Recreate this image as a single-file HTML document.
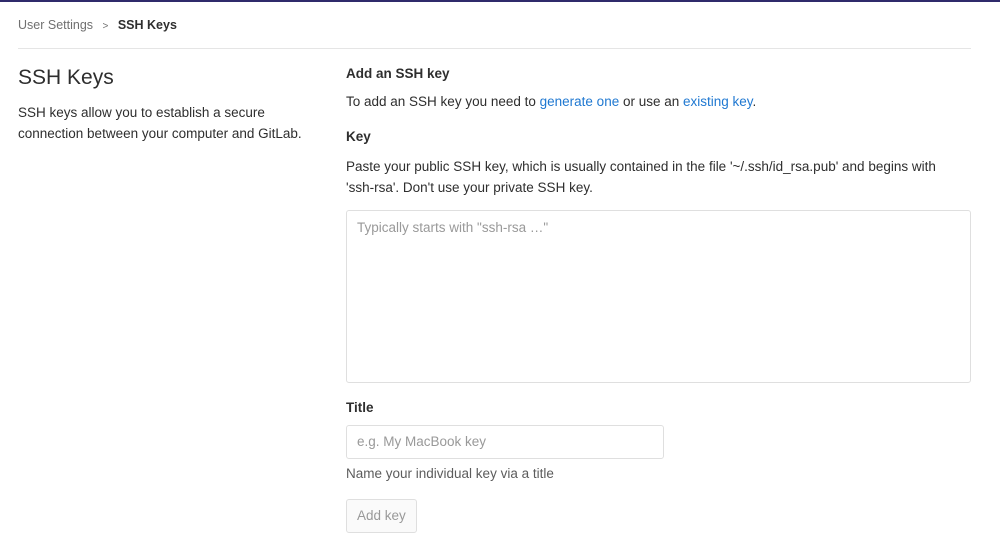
<!DOCTYPE html>
<html><head><style>
body{margin:0;width:1000px;height:541px;overflow:hidden;background:#fff;font-family:"Liberation Sans",sans-serif;color:#2e2e2e;position:relative}
.top{position:absolute;left:0;top:0;width:1000px;height:2px;background:#2f2a6b}
.a{position:absolute;white-space:nowrap}
a{color:#1f78d1;text-decoration:none}
.box{position:absolute;border:1px solid #dfdfdf;border-radius:3px;box-sizing:border-box}
</style></head><body>
<div class="top"></div>
<div class="a" style="left:18px;top:18px;font-size:12.5px;color:#707070">User Settings <span style="margin:0 6px;font-size:10px">&gt;</span> <b style="color:#2e2e2e">SSH Keys</b></div>
<div style="position:absolute;left:18px;top:48px;width:953px;height:1px;background:#e5e5e5"></div>
<div class="a" style="left:18px;top:66px;font-size:21px">SSH Keys</div>
<div class="a" style="left:18px;top:102px;font-size:13.5px;line-height:21px">SSH keys allow you to establish a secure<br>connection between your computer and GitLab.</div>
<div class="a" style="left:346px;top:66px;font-size:13.5px;font-weight:bold">Add an SSH key</div>
<div class="a" style="left:346px;top:94px;font-size:13.5px">To add an SSH key you need to <a>generate one</a> or use an <a>existing key</a>.</div>
<div class="a" style="left:346px;top:129px;font-size:13.5px;font-weight:bold">Key</div>
<div class="a" style="left:346px;top:156px;font-size:13.5px;line-height:21px">Paste your public SSH key, which is usually contained in the file '~/.ssh/id_rsa.pub' and begins with<br>'ssh-rsa'. Don't use your private SSH key.</div>
<div class="box" style="left:346px;top:210px;width:625px;height:173px"></div>
<div class="a" style="left:357px;top:220px;font-size:13.5px;color:#999">Typically starts with "ssh-rsa …"</div>
<div class="a" style="left:346px;top:400px;font-size:13.5px;font-weight:bold">Title</div>
<div class="box" style="left:346px;top:425px;width:318px;height:34px"></div>
<div class="a" style="left:357px;top:434px;font-size:13.5px;color:#999">e.g. My MacBook key</div>
<div class="a" style="left:346px;top:466px;font-size:13.5px;color:#5c5c5c">Name your individual key via a title</div>
<div class="box" style="left:346px;top:499px;width:71px;height:34px;background:#fafafa"></div>
<div class="a" style="left:357px;top:508px;font-size:13.5px;color:#999">Add key</div>
</body></html>
